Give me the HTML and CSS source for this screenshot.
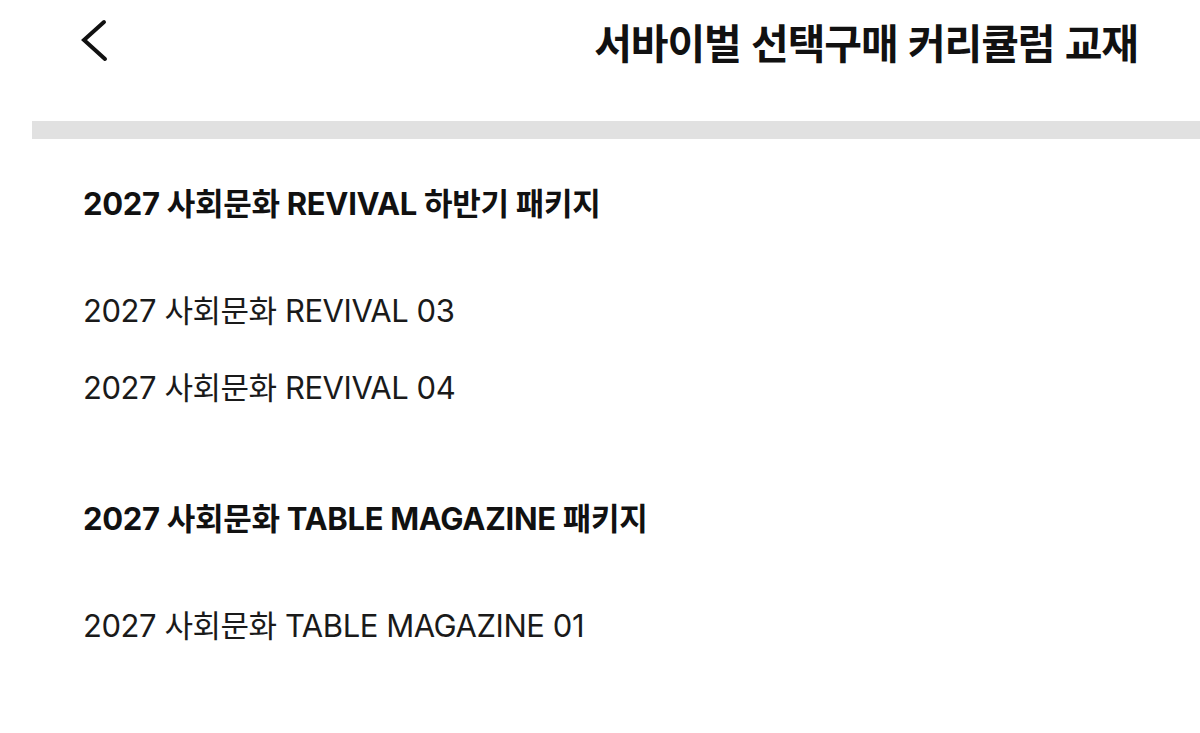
FILE: index.html
```html
<!DOCTYPE html>
<html lang="ko">
<head>
<meta charset="utf-8">
<link rel="stylesheet" href="styles.css">
</head>
<body>
<header class="topbar">
  <svg class="back" width="30" height="44" viewBox="0 0 30 44"><polyline points="23,3 3,21 24,40" fill="none" stroke="#111" stroke-width="4" stroke-linecap="round" stroke-linejoin="miter"/></svg>
  <h1 class="title">서바이벌 선택구매 커리큘럼 교재</h1>
</header>
<div class="divider"></div>
<main class="list">
  <section class="group">
    <h2 class="group-title">2027 사회문화 REVIVAL 하반기 패키지</h2>
    <ul class="items">
      <li class="item">2027 사회문화 REVIVAL 03</li>
      <li class="item">2027 사회문화 REVIVAL 04</li>
    </ul>
  </section>
  <section class="group">
    <h2 class="group-title">2027 사회문화 TABLE MAGAZINE 패키지</h2>
    <ul class="items">
      <li class="item">2027 사회문화 TABLE MAGAZINE 01</li>
    </ul>
  </section>
</main>
</body>
</html>
```
FILE: styles.css
```css
* { box-sizing: border-box; }
html, body { margin: 0; padding: 0; background: #fff; }
body {
  font-family: Inter, "Noto Sans CJK KR", sans-serif;
  color: #111;
  width: 1200px;
  height: 733px;
  overflow: hidden;
}
.topbar {
  height: 82px;
  display: flex;
  align-items: center;
  justify-content: space-between;
  padding: 0 62px 0 81px;
  margin-bottom: 39px;
}
.back { display: block; }
.title {
  margin: 0;
  font-family: "Noto Sans CJK KR", sans-serif;
  font-size: 41px;
  font-weight: 700;
  letter-spacing: -1.1px;
  line-height: 50px;
}
.divider {
  margin-left: 32px;
  height: 18px;
  background: #e1e1e1;
}
.list { padding: 45px 0 0 83px; }
.group { margin: 0; }
.group + .group { margin-top: 91px; }
.group-title {
  margin: 0;
  font-size: 31px;
  font-weight: 700;
  line-height: 40px;
  letter-spacing: -0.3px;
}
.items {
  list-style: none;
  margin: 67px 0 0;
  padding: 0;
  display: flex;
  flex-direction: column;
  gap: 37px;
}
.item {
  font-size: 31px;
  font-weight: 400;
  line-height: 40px;
  letter-spacing: -0.45px;
  color: #1a1a1a;
}
```
